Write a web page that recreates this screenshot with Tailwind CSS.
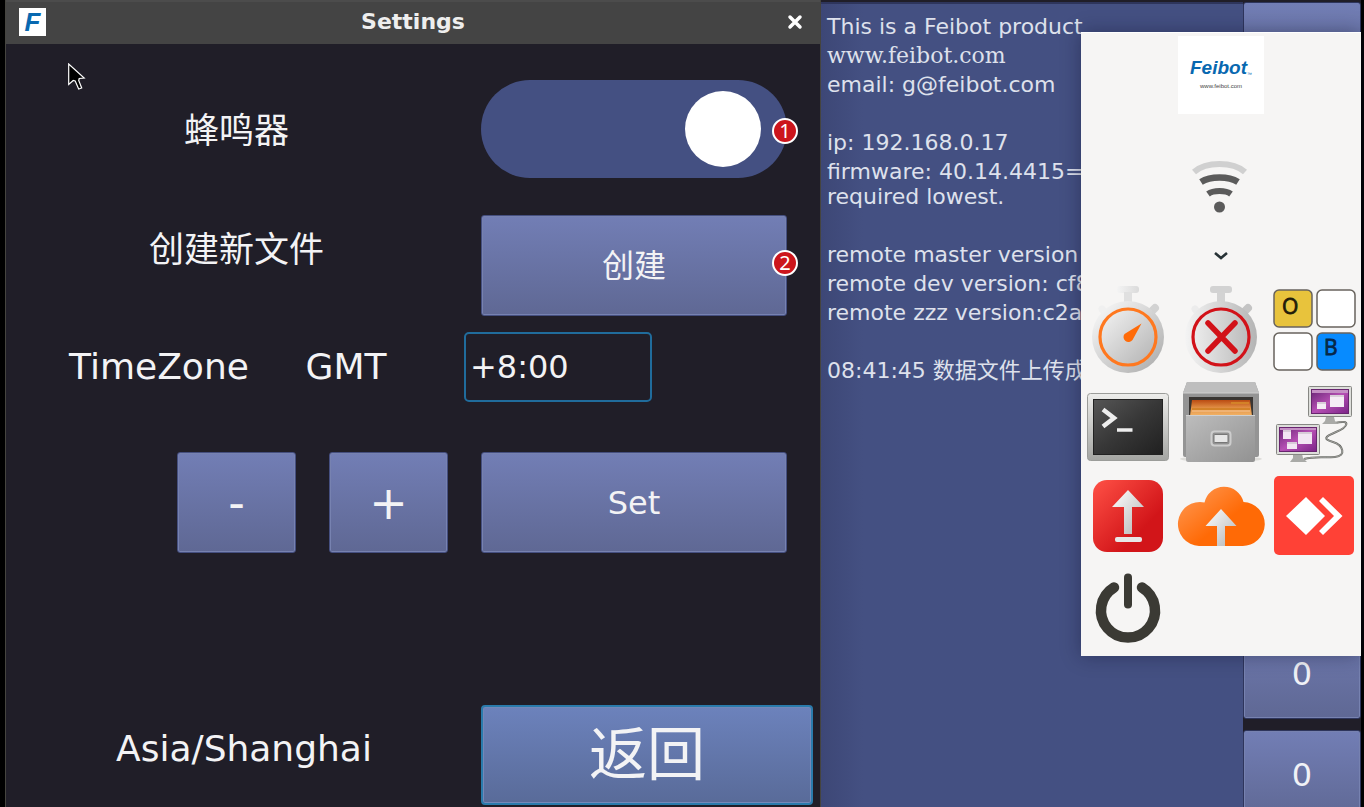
<!DOCTYPE html>
<html lang="zh-CN">
<head>
  <meta charset="UTF-8">
  <meta name="viewport" content="width=device-width, initial-scale=1.0">
  <title>Settings</title>
  <script src="https://cdn.jsdelivr.net/npm/@tailwindcss/browser@4"></script>
</head>
<body class="h-screen overflow-hidden bg-black font-['DejaVu_Sans','Noto_Sans_CJK_SC',sans-serif]">
  <div class="relative grid h-full grid-cols-[68fr_45fr] pl-[5px] pr-[3px]">

    <!-- Settings window -->
    <main class="flex min-w-0 flex-col border-x border-[#45443f] bg-[#201e28] pl-px text-[#f3f3f5]">
      <header class="-ml-px grid h-11 shrink-0 grid-cols-[1fr_auto_1fr] items-center border-t-2 border-[#4c4c4c] bg-[#444444] px-[13px] pb-[2px]">
        <div class="flex h-7 w-[27px] items-center justify-center bg-white font-['Liberation_Sans',sans-serif] text-[26px] leading-7 font-bold italic text-[#0868b0]">F</div>
        <h1 class="text-[22px] leading-7 font-bold text-[#eeeeee]">Settings</h1>
        <button aria-label="Close" class="mr-1 justify-self-end">
          <svg class="size-4" viewBox="0 0 16 16" fill="none" stroke="#fff" stroke-width="3.500" stroke-linecap="round"><path d="M3 3l10 10M13 3L3 13"/></svg>
        </button>
      </header>

      <div class="flex min-h-0 grow flex-col pt-9 pb-[2px]">
        <div class="grid grid-cols-[423fr_306fr] gap-x-[33px] pr-[33px] pl-[18px]">
          <label for="buzzer" class="flex h-[102px] items-center justify-center text-[35px] leading-[52px]">蜂鸣器</label>
          <div class="relative -mb-1">
            <input id="buzzer" type="checkbox" role="switch" checked class="block h-[98px] w-full appearance-none rounded-full bg-[#445082] after:ml-[26px] after:mt-[11px] after:block after:size-[76px] after:rounded-full after:bg-white checked:after:mr-[26px] checked:after:ml-auto">
            <span class="absolute top-[38px] -right-[11px] flex size-[26px] items-center justify-center rounded-full border-2 border-white bg-[#cc151c] font-['Noto_Sans',sans-serif] text-[20px] leading-5 text-white">1</span>
          </div>
        </div>

        <div class="mt-[33px] grid grid-cols-[423fr_306fr] gap-x-[33px] pr-[33px] pl-[18px]">
          <label for="create" class="flex h-[70px] items-center justify-center text-[35px] leading-[52px]">创建新文件</label>
          <div class="relative">
            <button id="create" class="block h-[101px] w-full rounded-[3px] border border-[#454f80] bg-linear-to-b from-[#727eb5] to-[#5f6894] text-[32px] leading-[48px] inset-shadow-[0_0_0_1px_#7782b0]">创建</button>
            <span class="absolute top-[35px] -right-[11px] flex size-[26px] items-center justify-center rounded-full border-2 border-white bg-[#cc151c] font-['Noto_Sans',sans-serif] text-[20px] leading-5 text-white">2</span>
          </div>
        </div>

        <div class="mt-4 grid grid-cols-[268fr_106fr_65fr_188fr_168fr] items-center pl-[18px] text-[36px] leading-[52px]">
          <span class="text-center">TimeZone</span>
          <label for="offset" class="text-center">GMT</label>
          <input id="offset" type="text" value="+8:00" class="col-start-4 h-[70px] w-full rounded-[5px] border-2 border-[#206c9c] bg-[#201e28] px-1 text-[32px] leading-[48px] outline-none">
        </div>

        <div class="mt-[50px] grid grid-cols-[119fr_119fr_119fr_306fr] gap-x-[33px] pr-[33px] pl-[18px]">
          <button class="col-start-2 h-[101px] rounded-[3px] border border-[#454f80] bg-linear-to-b from-[#727eb5] to-[#5f6894] text-[46px] leading-[52px] inset-shadow-[0_0_0_1px_#7782b0]">-</button>
          <button class="h-[101px] rounded-[3px] border border-[#454f80] bg-linear-to-b from-[#727eb5] to-[#5f6894] text-[46px] leading-[52px] inset-shadow-[0_0_0_1px_#7782b0]">+</button>
          <button class="h-[101px] rounded-[3px] border border-[#454f80] bg-linear-to-b from-[#727eb5] to-[#5f6894] text-[32px] leading-[48px] inset-shadow-[0_0_0_1px_#7782b0]">Set</button>
        </div>

        <div class="mt-auto grid grid-cols-[474fr_332fr] pr-[7px]">
          <span class="flex h-[88px] items-center justify-center text-[36px] leading-[52px]">Asia/Shanghai</span>
          <button class="h-[100px] rounded-[4px] border-2 border-[#2a7bac] bg-linear-to-b from-[#6c82bc] to-[#596b99] text-[58px] leading-[80px] inset-shadow-[0_0_0_1px_#7488b8]">返回</button>
        </div>
      </div>
    </main>

    <!-- Log and counters behind the dock -->
    <section class="flex min-w-0 bg-[#201e28] pt-[2px]">
      <div class="min-w-0 grow overflow-hidden border-t-2 border-[#2e355c] bg-[#445082] bg-linear-to-r from-[#3d4776] to-[#445082] to-10% pt-[10px] pl-[6px] text-[22px] leading-[25px] whitespace-nowrap text-[#dee1ec]">
        <p class="mb-1">This is a Feibot product</p>
        <p class="mb-1 font-['DejaVu_Serif',serif]">www.feibot.com</p>
        <p class="mb-1">email: g@feibot.com</p>
        <p class="mb-1">&nbsp;</p>
        <p class="mb-1">ip: 192.168.0.17</p>
        <p class="mb-1">firmware: 40.14.4415=<br>required lowest.</p>
        <p class="mb-1">&nbsp;</p>
        <p class="mb-1">remote master version</p>
        <p class="mb-1">remote dev version: cf8</p>
        <p class="mb-1">remote zzz version:c2a</p>
        <p class="mb-1">&nbsp;</p>
        <p class="mb-1">08:41:45 数据文件上传成</p>
      </div>
      <div class="-mb-[13px] flex w-[118px] shrink-0 flex-col gap-[11px] text-[32px] leading-[48px] text-[#f0f1f6]">
        <button aria-label="Counter" class="grow rounded-[3px] border border-[#2e355c] bg-linear-to-b from-[#727eb5] to-[#5f6894] to-15%"></button>
        <button class="h-[90px] rounded-[3px] border border-[#2e355c] bg-linear-to-b from-[#6f7ab0] to-[#5f6894] inset-shadow-[0_0_0_1px_#7782b0]">0</button>
        <button class="h-[90px] rounded-[3px] border border-[#2e355c] bg-linear-to-b from-[#727eb5] to-[#5f6894] inset-shadow-[0_0_0_1px_#7782b0]">0</button>
      </div>
    </section>

    <!-- Dock -->
    <aside class="absolute top-8 right-[3px] w-[280px] border-t border-white bg-[#f6f5f4] pb-px shadow-[0_0_18px_rgba(15,18,45,0.4)]">
      <div class="mx-auto mt-[3px] flex h-[78px] w-[86px] flex-col items-center bg-white pt-5">
        <p class="flex items-end font-['Liberation_Sans',sans-serif] text-[19px] leading-6 font-bold italic text-[#0868b0]">Feibot<span class="text-[5px] leading-3 font-normal">™</span></p>
        <p class="font-['Liberation_Sans',sans-serif] text-[6px] leading-3 text-[#444]">www.feibot.com</p>
      </div>
      <svg class="mx-auto mt-[46px] block h-[54px] w-[60px]" viewBox="0 0 60 54" fill="none" stroke="#5b5b5b" stroke-width="6">
        <path d="M3 12Q12 4 28.500 4T54 12" stroke="#d0d0d0"/>
        <path d="M10 22Q17 17.500 28.500 17.500T47 22" stroke-width="6.500"/>
        <path d="M17 34Q21 31 28.500 31T40 34" stroke-width="6"/>
        <circle cx="28.500" cy="47" r="5.500" fill="#5b5b5b" stroke="none"/>
      </svg>
      <button aria-label="More" class="mx-auto mt-9 block">
        <svg class="block h-3 w-4" viewBox="0 0 16 12" fill="none" stroke="#273236" stroke-width="2.600"><path d="M2 3l6 5 6-5"/></svg>
      </button>

      <div class="mt-[21px] grid grid-cols-3 justify-items-center">
        <button aria-label="Timer">
          <svg class="block size-[93px]" viewBox="0 0 93 93">
            <defs>
              <linearGradient id="steel" x1="0" y1="0" x2="1" y2="1"><stop offset=".1" stop-color="#f5f5f5"/><stop offset=".85" stop-color="#b5b5b5"/></linearGradient>
              <linearGradient id="steelH"><stop stop-color="#f4f4f4"/><stop offset="1" stop-color="#b4b4b4"/></linearGradient>
              <linearGradient id="cap"><stop stop-color="#f4f4f4"/><stop offset="1" stop-color="#dadada"/></linearGradient>
            </defs>
            <rect x="36" y="3" width="22" height="7" rx="3" fill="url(#cap)"/>
            <path d="M43 9h8v11h-8z" fill="#e0e0e0"/>
            <path d="M68 31l6-6" stroke="#d2d2d2" stroke-width="8" stroke-linecap="round"/>
            <path d="M25 31l-4-5" stroke="#f0f0f0" stroke-width="7" stroke-linecap="round"/>
            <circle cx="47" cy="54" r="36" fill="url(#steel)"/>
            <circle cx="47" cy="54" r="28" fill="none" stroke="#ff781f" stroke-width="3.200"/>
            <path d="M60.500 40.500L43.500 51a4.600 4.600 0 1 0 8 6z" fill="#ff6b08"/>
          </svg>
        </button>
        <button aria-label="Stop timer">
          <svg class="block size-[93px]" viewBox="0 0 93 93">
            <rect x="36" y="3" width="22" height="7" rx="3" fill="#d2d2d2"/>
            <path d="M43 9h8v11h-8z" fill="#d3d3d3"/>
            <path d="M68 31l6-6" stroke="#c4c4c4" stroke-width="8" stroke-linecap="round"/>
            <path d="M25 31l-4-5" stroke="#ececec" stroke-width="7" stroke-linecap="round"/>
            <circle cx="47" cy="54" r="36" fill="url(#steelH)"/>
            <circle cx="47" cy="54" r="28" fill="none" stroke="#d21219" stroke-width="3.200"/>
            <path d="M34 40l27 28M61 40L34 68" stroke="#d21219" stroke-width="5.500" stroke-linecap="round"/>
          </svg>
        </button>
        <button aria-label="Keyboard">
          <svg class="block size-[93px]" viewBox="0 0 93 93" stroke="#68635d" stroke-width="1.500">
            <rect x="6" y="7" width="38" height="37" rx="5" fill="#e8c33c"/>
            <rect x="49" y="7" width="38" height="37" rx="5" fill="#fff"/>
            <rect x="6" y="50" width="38" height="37" rx="5" fill="#fff"/>
            <rect x="49" y="50" width="38" height="37" rx="5" fill="#078bff"/>
            <text x="14" y="31" class="font-['Open_Sans'] text-[21px]" fill="#211b09" stroke="#211b09" stroke-width=".8">O</text>
            <text x="56" y="72" class="font-['Open_Sans'] text-[21px]" fill="#062748" stroke="#062748" stroke-width=".8">B</text>
          </svg>
        </button>

        <button aria-label="Terminal">
          <svg class="block size-[93px]" viewBox="0 0 93 93">
            <defs>
              <linearGradient id="bezel" x2="0" y2="1"><stop stop-color="#ededeb"/><stop offset="1" stop-color="#a4a5a2"/></linearGradient>
              <linearGradient id="screen" x2="1" y2="1"><stop stop-color="#565656"/><stop offset=".5" stop-color="#373737"/><stop offset="1" stop-color="#202020"/></linearGradient>
            </defs>
            <rect x="6.500" y="17.500" width="81" height="67" rx="3" fill="url(#bezel)" stroke="#9b9c99"/>
            <rect x="12.500" y="23.500" width="69" height="55" fill="url(#screen)" stroke="#222"/>
            <path d="M22 33.500l11 8.500-11 8.500" fill="none" stroke="#eee" stroke-width="4.500"/>
            <path d="M36 54h15.500" stroke="#eee" stroke-width="3.500"/>
          </svg>
        </button>
        <button aria-label="Files">
          <svg class="block size-[93px]" viewBox="0 0 93 93">
            <defs>
              <linearGradient id="drawer" x2="1" y2="1"><stop stop-color="#bdbdbd"/><stop offset="1" stop-color="#929292"/></linearGradient>
              <linearGradient id="paper" x2="0" y2="1"><stop stop-color="#ba4b12"/><stop offset=".5" stop-color="#e29045"/><stop offset="1" stop-color="#f2b468"/></linearGradient>
            </defs>
            <ellipse cx="47" cy="83" rx="41" ry="3" fill="#deddda"/>
            <path d="M13 6h68l4 11v62q0 2-2 2H11q-2 0-2-2V17z" fill="#949494"/>
            <path d="M13 6h68l4 11H9z" fill="#bebebe"/>
            <path d="M9 17h76" stroke="#d0d0d0"/>
            <path d="M15 21h64v22H15z" fill="#393532"/>
            <path d="M18 24h58l2 16H16z" fill="url(#paper)"/>
            <path d="M57 27h18M18 33h58" stroke="#d38228" stroke-width="2"/>
            <path d="M18 35h58" stroke="#f7c694"/>
            <path d="M12 39h69v45q0 2-2 2H14q-2 0-2-2z" fill="url(#drawer)"/>
            <path d="M12 39.500h69" stroke="#d0d0d0"/>
            <rect x="37.500" y="55.500" width="19" height="14" rx="3" fill="#929292" stroke="#cdcdcd" stroke-width="2"/>
            <rect x="40" y="58.500" width="14" height="8" rx="1" fill="#e6e6e6" stroke="#777"/>
          </svg>
        </button>
        <button aria-label="Remote desktop">
          <svg class="block size-[93px]" viewBox="0 0 93 93">
            <defs>
              <linearGradient id="plum" x2="1" y2="1"><stop stop-color="#672474"/><stop offset=".5" stop-color="#b650b4"/><stop offset="1" stop-color="#7b2487"/></linearGradient>
            </defs>
            <path d="M67 47C84 43 80 51 68 56s-13 7-3 10 14 14 2 15-20-1-31 2" fill="none" stroke="#666863" stroke-width="2"/>
            <path d="M67 47C84 43 80 51 68 56s-13 7-3 10 14 14 2 15-20-1-31 2" fill="none" stroke="#c9cac6" stroke-width=".6"/>
            <path d="M58 41h8l1 4 3 3H54l3-3z" fill="#a9aaa7"/>
            <rect x="40.500" y="10.500" width="43" height="30" rx="1" fill="#dddeda" stroke="#868783"/>
            <rect x="43.500" y="13.500" width="37" height="24" fill="url(#plum)" stroke="#68256f"/>
            <path d="M44 14h36v3H44z" fill="#c590c5"/>
            <path d="M62 19h14v12H62zM49 26h9v7h-9z" fill="#f5ecf5"/>
            <path d="M62 20h14M49 27h9" stroke="#bdb2bd"/>
            <path d="M25 78h9l1 4 4 4H22l3-4z" fill="#a9aaa7"/>
            <rect x="8.500" y="48.500" width="43" height="30" rx="1" fill="#dddeda" stroke="#868783"/>
            <rect x="11.500" y="51.500" width="37" height="24" fill="url(#plum)" stroke="#68256f"/>
            <path d="M12 52h36v2H12z" fill="#c590c5"/>
            <path d="M15 54h8v9h-8zM30 56h14v12H30zM19 66h10v7H19z" fill="#f2e6f3"/>
            <path d="M15 55h8M30 57h14M19 67h10" stroke="#bdb2bd"/>
          </svg>
        </button>

        <button aria-label="Upload">
          <svg class="block size-[93px]" viewBox="0 0 93 93">
            <defs>
              <linearGradient id="red" x2=".7" y2=".7"><stop stop-color="#ff5146"/><stop offset="1" stop-color="#d21519"/></linearGradient>
              <linearGradient id="arrow" x2="1" y2="1"><stop stop-color="#fff"/><stop offset="1" stop-color="#b4b4b4"/></linearGradient>
            </defs>
            <rect x="12" y="11" width="70" height="72" rx="14" fill="url(#red)"/>
            <path d="M47 21l16 17H51v27h-8V38H31z" fill="url(#arrow)"/>
            <rect x="34" y="68" width="27" height="5" rx="2" fill="#e7e7e7"/>
          </svg>
        </button>
        <button aria-label="Cloud upload">
          <svg class="block size-[93px]" viewBox="0 0 93 93">
            <defs>
              <linearGradient id="cloud" x2=".8" y2=".7"><stop stop-color="#ff9e5c"/><stop offset=".75" stop-color="#ff6a06"/></linearGradient>
            </defs>
            <path d="M25 77a22 22 0 1 1 5.500-43.500 20 20 0 0 1 39-.5A22 22 0 1 1 68 77z" fill="url(#cloud)"/>
            <path d="M47 40l15.500 17H51v20h-8V57H31.500z" fill="url(#arrow)"/>
          </svg>
        </button>
        <button aria-label="AnyDesk">
          <svg class="block size-[93px]" viewBox="0 0 93 93">
            <rect x="6" y="7" width="80" height="79" rx="5" fill="#ff4136"/>
            <path d="M38 28l19 19-19 19-20-19zM55 28l19.500 19L55 66l-4-4 15-15-15-15z" fill="#fff"/>
          </svg>
        </button>

        <button aria-label="Power">
          <svg class="block size-[93px]" viewBox="0 0 93 93" fill="none" stroke="#3b3a34" stroke-linecap="round">
            <path d="M33 25.500a27 27 0 1 0 28 0" stroke-width="10.500"/>
            <path d="M47 15.500v27" stroke-width="8"/>
          </svg>
        </button>
      </div>
    </aside>

    <!-- Mouse pointer -->
    <svg class="pointer-events-none absolute top-[63px] left-[68px] h-[28px] w-[18px]" viewBox="0 0 18 28" fill="#000" stroke="#fff" stroke-width="1.200"><path d="M.7 1v20.500l4.500-4 2 .5 3.500 8 3-1-3-7.500.5-2 5-.5z"/></svg>
  </div>
</body>
</html>
